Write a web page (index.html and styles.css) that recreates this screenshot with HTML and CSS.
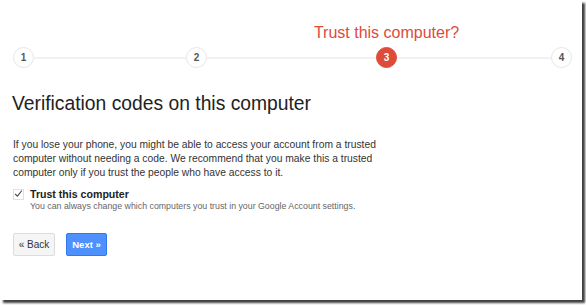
FILE: index.html
```html
<!DOCTYPE html>
<html lang="en">
<head>
    <meta charset="UTF-8">
    <title>Trust this computer?</title>
    <link rel="stylesheet" href="styles.css">
</head>
<body>
    <div class="page">
        <div class="steps">
            <div class="step">1</div>
            <div class="line"></div>
            <div class="step">2</div>
            <div class="line"></div>
            <div class="step current">
                3
                <span class="step-label">Trust this computer?</span>
            </div>
            <div class="line"></div>
            <div class="step">4</div>
        </div>

        <h1>Verification codes on this computer</h1>

        <p class="intro">If you lose your phone, you might be able to access your account from a trusted computer without needing a code. We recommend that you make this a trusted computer only if you trust the people who have access to it.</p>

        <label class="trust">
            <span class="checkbox">
                <svg viewBox="0 0 12 12">
                    <path d="M1.5 6.5 L4.5 9.5 L10.5 2" fill="none" stroke="#444" stroke-width="1.4"/>
                </svg>
            </span>
            <span class="trust-text">
                <span class="trust-title">Trust this computer</span>
                <span class="trust-hint">You can always change which computers you trust in your Google Account settings.</span>
            </span>
        </label>

        <div class="actions">
            <button class="btn back">&laquo; Back</button>
            <button class="btn next">Next &raquo;</button>
        </div>
    </div>
</body>
</html>
```

FILE: styles.css
```css
* {
    margin: 0;
    padding: 0;
    box-sizing: border-box;
    font-family: 'Liberation Sans', Arial, sans-serif;
}

body {
    background: #ffffff;
    width: 586px;
    height: 305px;
    overflow: hidden;
}

.page {
    width: 582px;
    height: 300px;
    background: #ffffff;
    box-shadow: 3px 3px 2px rgba(0, 0, 0, 0.75);
    padding: 47px 0 0 13px;
}

.steps {
    display: grid;
    grid-template-columns: 21px 152px 21px 169px 21px 154px 21px;
    align-items: center;
}

.step {
    width: 21px;
    height: 21px;
    border-radius: 50%;
    border: 1px solid #e6e6e6;
    background: #fff;
    color: #555;
    font-size: 10px;
    font-weight: bold;
    display: flex;
    align-items: center;
    justify-content: center;
    position: relative;
}

.step.current {
    background: #dd4b39;
    border-color: #dd4b39;
    color: #fff;
}

.step-label {
    position: absolute;
    bottom: 25px;
    left: 50%;
    transform: translateX(-50%);
    white-space: nowrap;
    color: #dd4b39;
    font-size: 16px;
    font-weight: normal;
}

.line {
    height: 2px;
    background: #f1f1f1;
}

h1 {
    font-size: 19.3px;
    font-weight: normal;
    color: #222;
    margin: 25px 0 0 -1px;
}

.intro {
    font-size: 10.3px;
    line-height: 14px;
    color: #333;
    width: 372px;
    margin-top: 23px;
}

.trust {
    display: flex;
    gap: 6px;
    margin-top: 8px;
}

.checkbox {
    width: 11px;
    height: 11px;
    border: 1px solid #e0e0e0;
    margin-top: 1px;
    display: flex;
}

.checkbox svg {
    width: 11px;
    height: 11px;
    margin: -2px 0 0 0;
}

.trust-text {
    display: flex;
    flex-direction: column;
}

.trust-title {
    font-size: 10.6px;
    font-weight: bold;
    color: #222;
    line-height: 13px;
}

.trust-hint {
    font-size: 8.8px;
    color: #666;
    line-height: 11px;
}

.actions {
    display: flex;
    gap: 11px;
    margin-top: 21px;
}

.btn {
    height: 23px;
    border-radius: 2px;
    font-size: 9.5px;
    padding: 0;
    white-space: nowrap;
}

.back {
    width: 42px;
    background: #f5f5f5;
    border: 1px solid #dcdcdc;
    color: #333;
    font-size: 10px;
}

.next {
    width: 41px;
    background: #4d90fe;
    border: 1px solid #3079ed;
    color: #fff;
    font-weight: bold;
}
```
